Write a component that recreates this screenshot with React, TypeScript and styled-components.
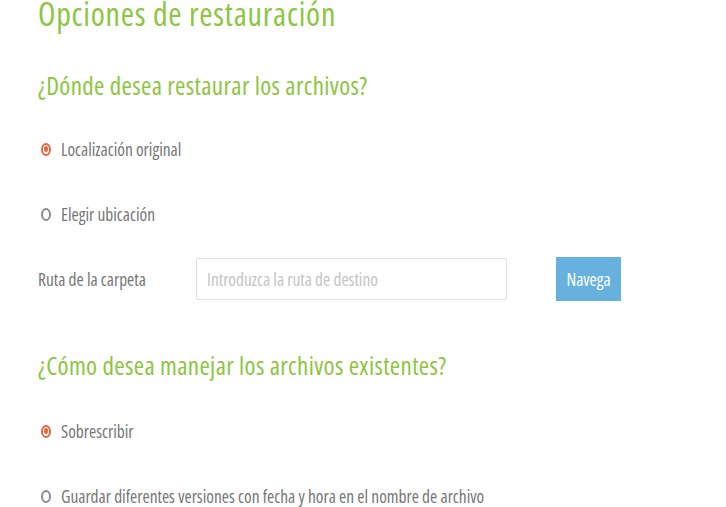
import React from "react";
import styled, { createGlobalStyle } from "styled-components";

const Global = createGlobalStyle`
  html, body { margin: 0; padding: 0; background: #ffffff; }
  body { font-family: "Open Sans", "Liberation Sans", sans-serif; font-stretch: 75%; }
  * { box-sizing: border-box; }
`;

const Page = styled.div`
  width: 726px;
  height: 507px;
  overflow: hidden;
  padding: 0 0 0 38px;
  display: flex;
  flex-direction: column;
`;

const Title = styled.h1`
  margin: 0;
  font-size: 32px;
  letter-spacing: 0.75px;
  line-height: 28px;
  font-weight: 400;
  color: #8cc63f;
`;

const Heading = styled.h2<{ $top: number }>`
  margin: ${(p) => p.$top}px 0 0 0;
  font-size: 25px;
  letter-spacing: 0.35px;
  line-height: 32px;
  font-weight: 400;
  color: #8cc63f;
`;

const Option = styled.label<{ $top: number }>`
  display: flex;
  align-items: center;
  gap: 10px;
  margin-top: ${(p) => p.$top}px;
  padding-left: 3px;
  height: 20px;
  font-size: 17.4px;
  color: #767676;
`;

const Radio = styled.span<{ $checked?: boolean }>`
  flex: none;
  width: 10px;
  height: 13px;
  border-radius: 50%;
  border: 2px solid ${(p) => (p.$checked ? "#e8643a" : "#8a8a8f")};
  display: flex;
  align-items: center;
  justify-content: center;
  &::after {
    content: "";
    display: ${(p) => (p.$checked ? "block" : "none")};
    width: 4px;
    height: 6px;
    border-radius: 50%;
    background: #e8643a;
  }
`;

const FolderRow = styled.div`
  display: flex;
  align-items: center;
  margin-top: 33px;
  height: 44px;
`;

const FieldLabel = styled.span`
  width: 158px;
  font-size: 17.4px;
  color: #767676;
`;

const PathInput = styled.input`
  width: 311px;
  height: 42px;
  border: 1px solid #dedede;
  border-radius: 2px;
  padding: 0 10px;
  font-family: inherit;
  font-stretch: 75%;
  font-size: 17.4px;
  color: #555;
  outline: none;
  &::placeholder { color: #c4c4c4; }
`;

const BrowseButton = styled.button`
  margin-left: 49px;
  width: 65px;
  height: 44px;
  border: none;
  background: #67b1de;
  color: #ffffff;
  font-family: inherit;
  font-stretch: 75%;
  font-weight: 400;
  font-size: 17.4px;
  padding: 0;
`;

export default function App() {
  return (
    <>
      <Global />
      <Page>
        <Title>Opciones de restauración</Title>
        <Heading $top={41}>¿Dónde desea restaurar los archivos?</Heading>
        <Option $top={38}>
          <Radio $checked />
          Localización original
        </Option>
        <Option $top={45}>
          <Radio />
          Elegir ubicación
        </Option>
        <FolderRow>
          <FieldLabel>Ruta de la carpeta</FieldLabel>
          <PathInput placeholder="Introduzca la ruta de destino" />
          <BrowseButton>Navega</BrowseButton>
        </FolderRow>
        <Heading $top={48}>¿Cómo desea manejar los archivos existentes?</Heading>
        <Option $top={40}>
          <Radio $checked />
          Sobrescribir
        </Option>
        <Option $top={45}>
          <Radio />
          Guardar diferentes versiones con fecha y hora en el nombre de archivo
        </Option>
      </Page>
    </>
  );
}
